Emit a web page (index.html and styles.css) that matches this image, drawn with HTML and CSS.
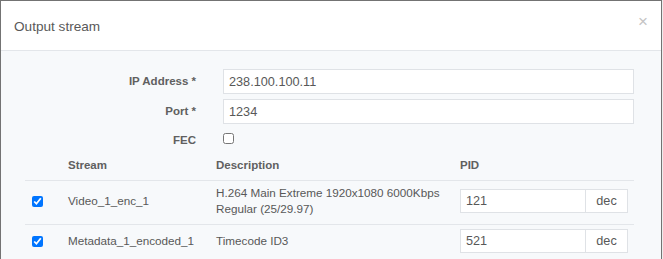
FILE: index.html
```html
<!DOCTYPE html>
<html lang="en">
<head>
    <meta charset="UTF-8">
    <title>Output stream</title>
    <link rel="stylesheet" href="styles.css">
</head>
<body>
    <div class="modal">
        <div class="modal-header">
            <h4 class="modal-title">Output stream</h4>
            <button class="close" type="button">&times;</button>
        </div>

        <div class="modal-body">
            <div class="form-grid">
                <label class="form-label">IP Address *</label>
                <input class="text-input" type="text" value="238.100.100.11">

                <label class="form-label">Port *</label>
                <input class="text-input" type="text" value="1234">

                <label class="form-label form-label-short">FEC</label>
                <div class="check-cell"><input class="check" type="checkbox"></div>
            </div>

            <table class="streams">
                <colgroup>
                    <col class="col-check">
                    <col class="col-stream">
                    <col class="col-desc">
                    <col class="col-pid">
                </colgroup>
                <thead>
                    <tr>
                        <th></th>
                        <th>Stream</th>
                        <th>Description</th>
                        <th>PID</th>
                    </tr>
                </thead>
                <tbody>
                    <tr>
                        <td class="cell-check"><input class="check" type="checkbox" checked></td>
                        <td>Video_1_enc_1</td>
                        <td>H.264 Main Extreme 1920x1080 6000Kbps Regular (25/29.97)</td>
                        <td>
                            <div class="input-group">
                                <input class="pid-input" type="text" value="121">
                                <span class="addon">dec</span>
                            </div>
                        </td>
                    </tr>
                    <tr>
                        <td class="cell-check"><input class="check" type="checkbox" checked></td>
                        <td>Metadata_1_encoded_1</td>
                        <td>Timecode ID3</td>
                        <td>
                            <div class="input-group">
                                <input class="pid-input" type="text" value="521">
                                <span class="addon">dec</span>
                            </div>
                        </td>
                    </tr>
                </tbody>
            </table>
        </div>
    </div>
</body>
</html>
```

FILE: styles.css
```css
:root {
    --text: #585858;
    --label: #606060;
    --line: #e3e6ea;
    --input-border: #dfe2e6;
    --body-bg: #f7f9fb;
}

* {
    margin: 0;
    padding: 0;
    box-sizing: border-box;
}

body {
    font-family: "Liberation Sans", Arial, sans-serif;
    font-size: 11.7px;
    color: var(--text);
    background: #ececec;
}

.modal {
    width: 662px;
    min-height: 259px;
    background: var(--body-bg);
    border: 1px solid #737373;
    border-bottom: none;
}

.modal-header {
    height: 50px;
    background: #fff;
    border-bottom: 1px solid var(--line);
    display: flex;
    align-items: center;
    justify-content: space-between;
    padding: 0 13px 0 13px;
}

.modal-title {
    font-size: 13.6px;
    font-weight: normal;
    color: #595959;
    padding-top: 1px;
}

.close {
    align-self: flex-start;
    margin-top: 12px;
    border: none;
    background: none;
    font-family: "Liberation Sans", Arial, sans-serif;
    font-size: 17px;
    line-height: 1;
    color: #c4c4c4;
    cursor: pointer;
}

.modal-body {
    padding: 18px 27px 0 24px;
}

.form-grid {
    display: grid;
    grid-template-columns: 171px 1fr;
    column-gap: 27px;
    row-gap: 5px;
}

.form-label {
    text-align: right;
    font-weight: bold;
    font-size: 11.5px;
    color: var(--label);
    line-height: 25px;
}

.form-label-short {
    line-height: 22px;
}

.text-input {
    height: 25px;
    border: 1px solid var(--input-border);
    background: #fff;
    padding: 0 5px;
    font-family: inherit;
    font-size: 12.7px;
    color: var(--text);
    outline: none;
}

.check {
    width: 11px;
    height: 11px;
    margin: 0;
    display: block;
}

.check-cell .check {
    margin-top: 4px;
}

.streams {
    width: 609px;
    border-collapse: collapse;
    table-layout: fixed;
}

.col-check { width: 35px; }
.col-stream { width: 148px; }
.col-desc { width: 244px; }
.col-pid { width: 182px; }

.streams th {
    text-align: left;
    font-weight: bold;
    font-size: 11.5px;
    color: var(--label);
    line-height: 17px;
    padding: 6px 4px 6px 8px;
    border-bottom: 1px solid var(--line);
}

.streams td {
    line-height: 16px;
    padding: 4px 2px 7px 8px;
    vertical-align: middle;
    border-bottom: 1px solid var(--line);
}

.streams td.cell-check {
    padding-left: 7px;
}

.input-group {
    display: flex;
    width: 168px;
    height: 24px;
}

.pid-input {
    width: 125px;
    border: 1px solid var(--input-border);
    border-right: none;
    background: #fff;
    padding: 0 5px;
    font-family: inherit;
    font-size: 12.7px;
    color: var(--text);
    outline: none;
}

.addon {
    flex: 1;
    display: flex;
    align-items: center;
    justify-content: center;
    border: 1px solid var(--input-border);
    background: #fff;
    font-size: 12.7px;
}
```
